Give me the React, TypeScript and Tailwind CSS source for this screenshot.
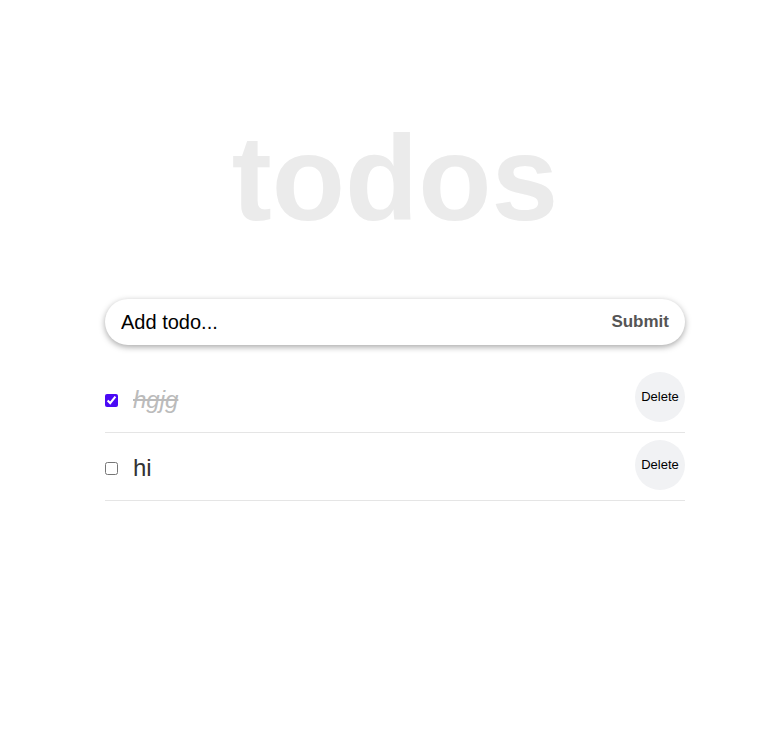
import { useState } from "react";

type Todo = { id: number; text: string; done: boolean };

export default function App() {
    const [todos, setTodos] = useState<Todo[]>([
        { id: 1, text: "hgjg", done: true },
        { id: 2, text: "hi", done: false },
    ]);

    const toggle = (id: number) =>
        setTodos(todos.map((t) => (t.id === id ? { ...t, done: !t.done } : t)));
    const remove = (id: number) => setTodos(todos.filter((t) => t.id !== id));

    return (
        <div className="min-h-[742px] bg-white flex justify-center pl-2 font-['Liberation_Sans',Arial,sans-serif]">
            <div className="w-[580px] flex flex-col">
                <h1 className="mt-[108px] text-center text-[120px] font-bold leading-[140px] text-[#ebebeb]">
                    todos
                </h1>

                <form
                    className="mt-[51px] h-[46px] flex items-center rounded-full bg-white shadow-[0_2px_6px_rgba(0,0,0,0.35)] pl-4 pr-4"
                    onSubmit={(e) => e.preventDefault()}
                >
                    <input
                        className="flex-1 outline-none text-[20px] text-black placeholder:text-black bg-transparent"
                        placeholder="Add todo..."
                    />
                    <button type="submit" className="text-[17px] font-bold text-[#555]">
                        Submit
                    </button>
                </form>

                <ul className="mt-5">
                    {todos.map((t) => (
                        <li
                            key={t.id}
                            className="h-[68px] flex items-start pt-[7px] border-b border-[#e5e5e5]"
                        >
                            <div className="flex-1 h-[56px] flex items-center">
                                <input
                                    type="checkbox"
                                    checked={t.done}
                                    onChange={() => toggle(t.id)}
                                    className="w-[13px] h-[13px] accent-[#4a0af5]"
                                />
                                <span
                                    className={
                                        t.done
                                            ? "ml-[15px] text-[24px] italic line-through text-[#bbbbbb]"
                                            : "ml-[15px] text-[24px] text-[#333]"
                                    }
                                >
                                    {t.text}
                                </span>
                            </div>
                            <button
                                onClick={() => remove(t.id)}
                                className="w-[50px] h-[50px] rounded-full bg-[#f1f2f4] text-[13px] text-black"
                            >
                                Delete
                            </button>
                        </li>
                    ))}
                </ul>
            </div>
        </div>
    );
}
